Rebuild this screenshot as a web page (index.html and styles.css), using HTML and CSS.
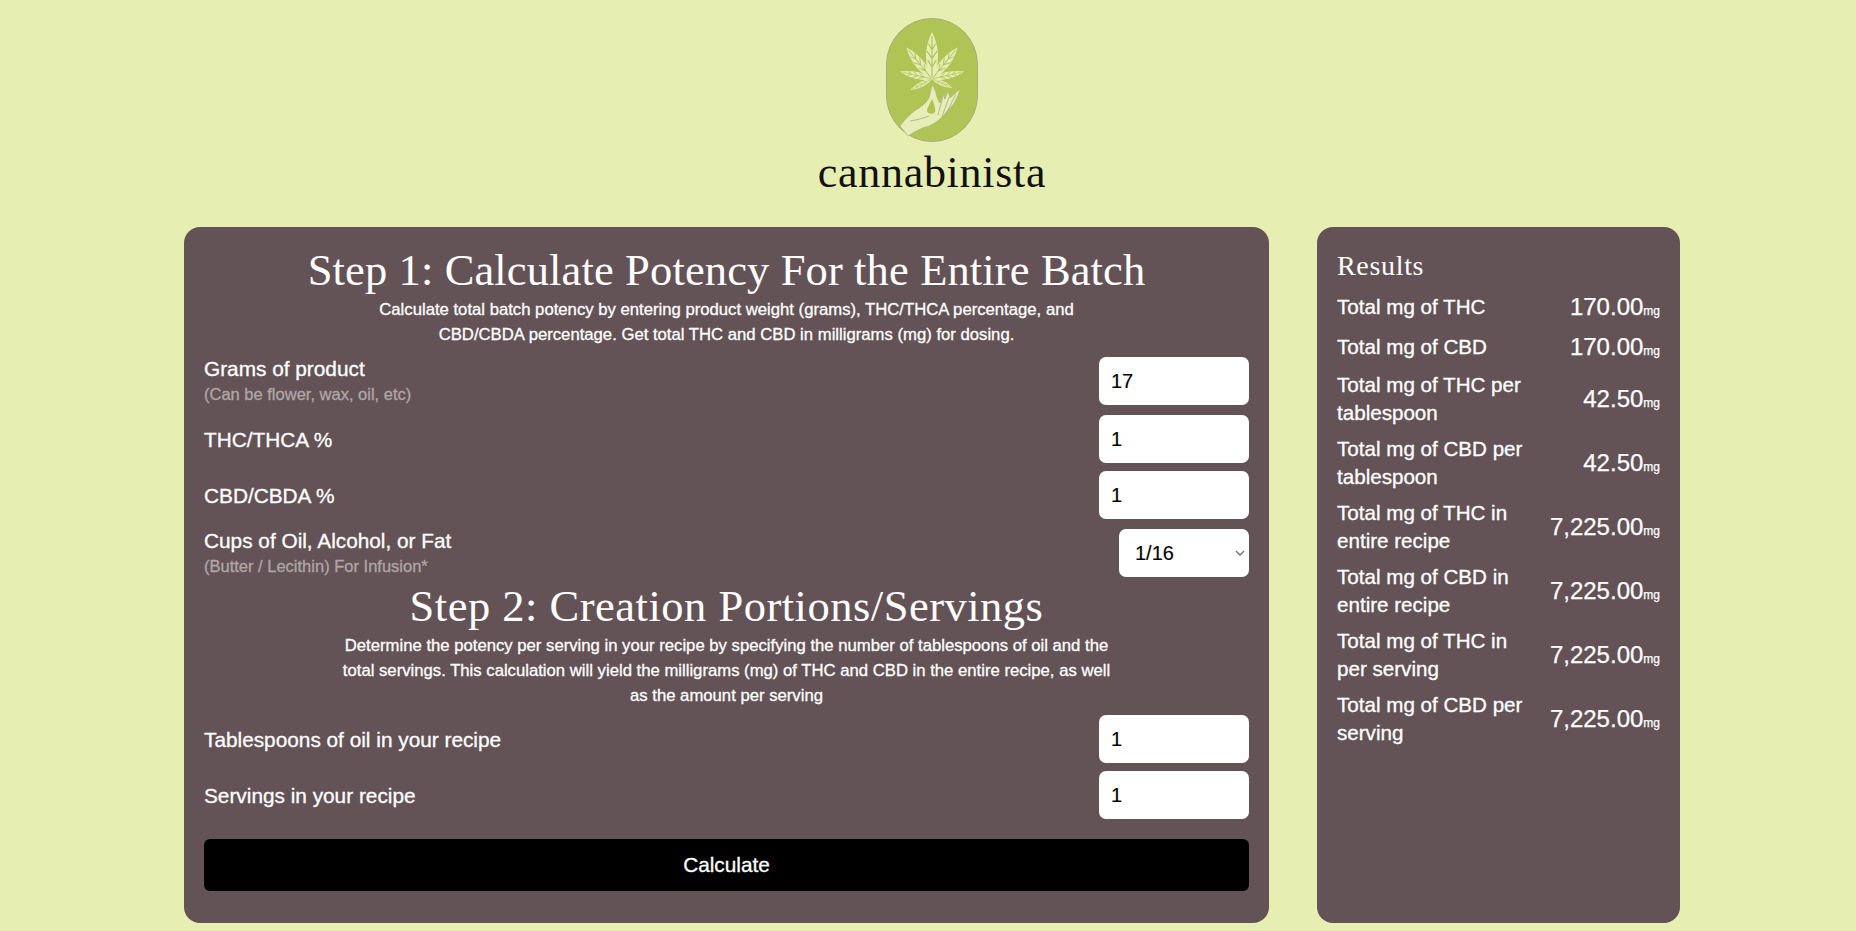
FILE: index.html
```html
<!DOCTYPE html>
<html lang="en">
<head>
<meta charset="utf-8">
<title>Cannabinista Calculator</title>
<link rel="stylesheet" href="styles.css">
</head>
<body>
<header class="brand">
  <svg class="logo" viewBox="0 0 92 124" width="92" height="124" aria-hidden="true">
    <rect x="0.5" y="0.5" width="91" height="123" rx="45.500" ry="46" fill="#b0c455" stroke="#a9ad84"/>
    <defs>
      <g id="leaf">
        <path d="M0 0C-5 -8 -6 -20 0 -32C6 -20 5 -8 0 0Z" fill="#e6edb6"/>
        <path d="M0 -1V-29M0 -8L-3 -13M0 -14L-3.500 -19M0 -20L-2.500 -24M0 -8L3 -13M0 -14L3.500 -19M0 -20L2.500 -24" stroke="#b0c455" stroke-width=".8" fill="none"/>
      </g>
    </defs>
    <use href="#leaf" transform="translate(46 61) scale(1.45 1.47)"/>
    <use href="#leaf" transform="translate(46 61) rotate(-39) scale(1.1 1.28)"/>
    <use href="#leaf" transform="translate(46 61) rotate(39) scale(1.1 1.28)"/>
    <use href="#leaf" transform="translate(46 61) rotate(-77) scale(.85 1.03)"/>
    <use href="#leaf" transform="translate(46 61) rotate(77) scale(.85 1.03)"/>
    <use href="#leaf" transform="translate(46 61) rotate(-117) scale(.6 .76)"/>
    <use href="#leaf" transform="translate(46 61) rotate(113) scale(.6 .69)"/>
    <path d="M14 108C20 100 26 94 33 90C39 86 43 82 44 76L46 67C49 70 50 75 51 79C52 82 53 84 54 85L57 76L59 81L62 73L64 80L74 71C72 80 67 88 62 92C56 100 50 105 43 108C35 110 28 114 22 118Z" fill="#e6edb6" stroke="#a9ad84" stroke-width=".6"/>
    <path d="M46 81C48 86 50 90 49 94C47 97 42 96 41 93C41 90 44 86 46 81Z" fill="#b0c455"/>
    <path d="M57 78L52 97M63 79L56 99M70 76L60 96M24 103C31 102 38 100 43 98" stroke="#a9ad84" stroke-width=".8" fill="none"/>
  </svg>
  <div class="wordmark">cannabinista</div>
</header>
<main class="layout">
  <form class="panel calc">
    <h1 class="step-title title-one">Step 1: Calculate Potency For the Entire Batch</h1>
    <p class="step-desc desc-one">Calculate total batch potency by entering product weight (grams), THC/THCA percentage, and CBD/CBDA percentage. Get total THC and CBD in milligrams (mg) for dosing.</p>
    <div class="field">
      <label class="label">Grams of product<small class="note">(Can be flower, wax, oil, etc)</small></label>
      <input class="input" type="text" value="17">
    </div>
    <div class="field">
      <label class="label">THC/THCA %</label>
      <input class="input" type="text" value="1">
    </div>
    <div class="field">
      <label class="label">CBD/CBDA %</label>
      <input class="input" type="text" value="1">
    </div>
    <div class="field">
      <label class="label">Cups of Oil, Alcohol, or Fat<small class="note">(Butter / Lecithin) For Infusion*</small></label>
      <select class="select"><option>1/16</option><option>1/8</option><option>1/4</option><option>1/2</option><option>1</option></select>
    </div>
    <h2 class="step-title title-two">Step 2: Creation Portions/Servings</h2>
    <p class="step-desc desc-two">Determine the potency per serving in your recipe by specifying the number of tablespoons of oil and the total servings. This calculation will yield the milligrams (mg) of THC and CBD in the entire recipe, as well as the amount per serving</p>
    <div class="field">
      <label class="label">Tablespoons of oil in your recipe</label>
      <input class="input" type="text" value="1">
    </div>
    <div class="field">
      <label class="label">Servings in your recipe</label>
      <input class="input" type="text" value="1">
    </div>
    <button class="calc-btn" type="button">Calculate</button>
  </form>
  <aside class="panel results">
    <h2 class="results-title">Results</h2>
    <div class="result"><span class="result-name">Total mg of THC</span><span class="result-val">170.00<small class="unit">mg</small></span></div>
    <div class="result"><span class="result-name">Total mg of CBD</span><span class="result-val">170.00<small class="unit">mg</small></span></div>
    <div class="result"><span class="result-name">Total mg of THC per tablespoon</span><span class="result-val">42.50<small class="unit">mg</small></span></div>
    <div class="result"><span class="result-name">Total mg of CBD per tablespoon</span><span class="result-val">42.50<small class="unit">mg</small></span></div>
    <div class="result"><span class="result-name">Total mg of THC in entire recipe</span><span class="result-val">7,225.00<small class="unit">mg</small></span></div>
    <div class="result"><span class="result-name">Total mg of CBD in entire recipe</span><span class="result-val">7,225.00<small class="unit">mg</small></span></div>
    <div class="result"><span class="result-name">Total mg of THC in per serving</span><span class="result-val">7,225.00<small class="unit">mg</small></span></div>
    <div class="result"><span class="result-name">Total mg of CBD per serving</span><span class="result-val">7,225.00<small class="unit">mg</small></span></div>
  </aside>
</main>
</body>
</html>
```
FILE: styles.css
```css
* { box-sizing: border-box; }
html, body { margin: 0; height: 100%; }
body {
  background: #e7eeb2;
  font-family: "Liberation Sans", Arial, sans-serif;
  color: #fff;
  padding: 18px 176px 0 184px;
  overflow: hidden;
}
.brand { display: flex; flex-direction: column; align-items: center; height: 209px; }
.logo { display: block; }
.wordmark {
  font-family: "Liberation Serif", serif;
  font-size: 44px;
  line-height: 46px;
  color: #111;
  letter-spacing: .7px;
  margin-top: 8px;
}
.layout { display: flex; gap: 48px; align-items: stretch; height: 696px; }
.panel { background: #645356; border-radius: 16px; }
.calc { width: 1085px; padding: 20px; }
.results { width: 363px; padding: 20px; }
.step-title {
  font-family: "Liberation Serif", serif;
  font-weight: 400;
  font-size: 44.500px;
  line-height: 46px;
  text-align: center;
}
.title-one { margin: 0 0 4px; letter-spacing: .13px; }
.title-two { margin: -4px 0 4px; letter-spacing: .5px; }
.step-desc {
  margin: 0 auto;
  font-size: 16.700px;
  line-height: 25px;
  text-align: center;
  -webkit-text-stroke: .3px #fff;
}
.desc-one { width: 720px; margin-bottom: 8px; }
.desc-two { width: 780px; margin-bottom: 7px; }
.field { display: flex; align-items: center; justify-content: space-between; margin-bottom: 8px; }
.label { font-size: 20.800px; line-height: 27px; -webkit-text-stroke: .3px #fff; }
.note { display: block; font-size: 16.500px; line-height: 25px; color: #b0a6a8; -webkit-text-stroke: .3px #b0a6a8; }
.input, .select {
  height: 48px;
  border: 0;
  border-radius: 7px;
  background-color: #fff;
  color: #000;
  font-family: "Liberation Sans", Arial, sans-serif;
  font-size: 20px;
  -webkit-text-stroke: .15px #000;
}
.input { width: 150px; padding: 0 12px; }
.select {
  width: 130px;
  padding: 0 16px;
  appearance: none;
  background-image: url("data:image/svg+xml,%3Csvg xmlns='http://www.w3.org/2000/svg' width='10' height='6' viewBox='0 0 10 6'%3E%3Cpath d='M1 1l4 4 4-4' fill='none' stroke='%23777' stroke-width='1.500'/%3E%3C/svg%3E");
  background-repeat: no-repeat;
  background-position: right 4px center;
}
.calc-btn {
  display: block;
  width: 100%;
  height: 52px;
  margin-top: 20px;
  border: 0;
  border-radius: 6px;
  background: #000;
  color: #fff;
  font-family: "Liberation Sans", Arial, sans-serif;
  font-size: 20.800px;
  -webkit-text-stroke: .3px #fff;
}
.results-title {
  margin: 0 0 6px;
  font-family: "Liberation Serif", serif;
  font-weight: 400;
  font-size: 28px;
  line-height: 38px;
  letter-spacing: .67px;
}
.result { display: flex; justify-content: space-between; align-items: center; gap: 12px; margin-bottom: 8px; }
.result-name { font-size: 20.600px; line-height: 28px; -webkit-text-stroke: .3px #fff; max-width: 192px; }
.result-val { font-size: 24px; line-height: 32px; height: 32px; white-space: nowrap; -webkit-text-stroke: .25px #fff; }
.unit { font-size: 12px; line-height: 1; }
```
